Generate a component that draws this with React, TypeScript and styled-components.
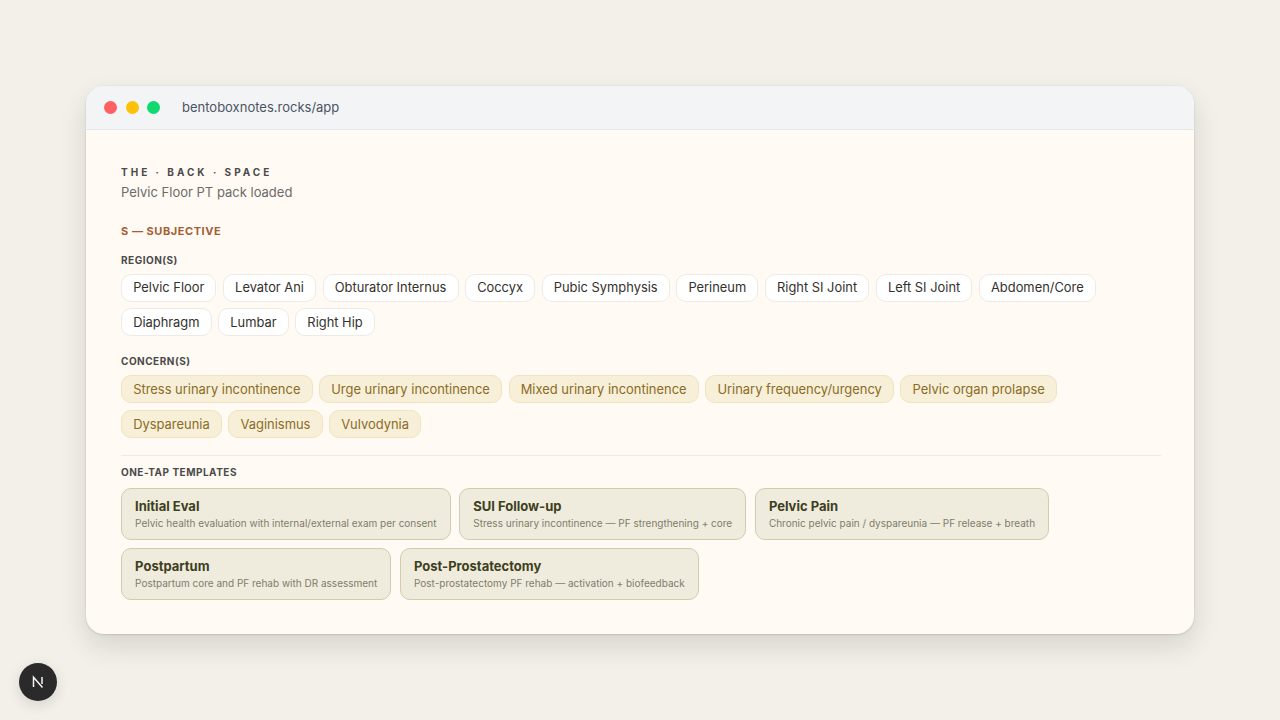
import React from "react"
import styled, { createGlobalStyle } from "styled-components"

const GlobalStyle = createGlobalStyle`
  html, body {
    margin: 0;
    padding: 0;
    background: #f3f0e9;
    font-family: Inter, "Liberation Sans", sans-serif;
  }
`

const Page = styled.main`
  height: 720px;
  box-sizing: border-box;
  padding: 86px;
  overflow: hidden;
`

const Window = styled.section`
  height: 548px;
  border-radius: 18px;
  overflow: hidden;
  background: #fffaf3;
  box-shadow: 0 0 0 1px rgba(0, 0, 0, 0.02), 0 1px 2px rgba(0, 0, 0, 0.1), 0 12px 28px rgba(0, 0, 0, 0.12);
`

const TitleBar = styled.header`
  height: 44px;
  box-sizing: border-box;
  display: flex;
  align-items: center;
  padding: 0 0 0 18px;
  background: #f3f4f6;
  border-bottom: 1px solid #e5e7eb;
`

const Dot = styled.span<{ $color: string }>`
  width: 13px;
  height: 13px;
  border-radius: 50%;
  margin-right: 8.5px;
  background: ${props => props.$color};
`

const Url = styled.span`
  margin-left: 13.5px;
  padding-bottom: 2px;
  font-size: 13px;
  color: #4b5563;
`

const Body = styled.div`
  padding: 35px 33px 0 35px;
`

const Brand = styled.div`
  font-size: 10px;
  line-height: 14px;
  font-weight: 700;
  letter-spacing: 0.3em;
  color: #4a4a4a;
`

const Pack = styled.div`
  margin-top: 5px;
  font-size: 13px;
  line-height: 16px;
  color: #6b6b6b;
`

const SectionTitle = styled.h2`
  margin: 24px 0 0;
  font-size: 11px;
  line-height: 14px;
  font-weight: 700;
  letter-spacing: 0.05em;
  color: #a55d35;
`

const Label = styled.h3<{ $top: number; $gap: number }>`
  margin: ${props => props.$top}px 0 ${props => props.$gap}px;
  font-size: 10px;
  line-height: 14px;
  font-weight: 700;
  letter-spacing: 0.05em;
  color: #4a4a4a;
`

const ChipRow = styled.div`
  display: flex;
  flex-wrap: wrap;
  gap: 6.5px;
`

const Chip = styled.button<{ $warm?: boolean }>`
  height: 28px;
  box-sizing: border-box;
  padding: 0 11.15px;
  border-radius: 10px;
  font: 400 ${props => (props.$warm ? "12.93px" : "12.88px")} Inter, sans-serif;
  border: 1px solid ${props => (props.$warm ? "#f1e3bf" : "#efebe4")};
  background: ${props => (props.$warm ? "#f8efd9" : "#ffffff")};
  color: ${props => (props.$warm ? "#8a6c26" : "#33312e")};
`

const Divider = styled.hr`
  margin: 17.5px 0 0;
  border: 0;
  border-top: 1px solid #efebe3;
`

const Templates = styled.div`
  display: flex;
  flex-wrap: wrap;
  gap: 8px 8.5px;
`

const Card = styled.button`
  height: 52px;
  box-sizing: border-box;
  padding: 0 13.1px;
  display: flex;
  flex-direction: column;
  justify-content: center;
  align-items: flex-start;
  border-radius: 10px;
  border: 1px solid #d2ccae;
  background: #efebdd;
  font-family: Inter, sans-serif;
`

const CardTitle = styled.span`
  margin-bottom: 2px;
  font-size: 13px;
  line-height: 16px;
  font-weight: 700;
  color: #3d4020;
`

const CardText = styled.span`
  font-size: 10px;
  line-height: 15px;
  color: #7f7d6a;
`

const DevBadge = styled.div`
  position: fixed;
  left: 19px;
  bottom: 19px;
  width: 38px;
  height: 38px;
  display: flex;
  align-items: center;
  justify-content: center;
  border-radius: 50%;
  background: #2a2a2a;
  box-shadow: 0 4px 14px rgba(0, 0, 0, 0.12);
`

const regions = ["Pelvic Floor", "Levator Ani", "Obturator Internus", "Coccyx", "Pubic Symphysis", "Perineum", "Right SI Joint", "Left SI Joint", "Abdomen/Core", "Diaphragm", "Lumbar", "Right Hip"]
const concerns = ["Stress urinary incontinence", "Urge urinary incontinence", "Mixed urinary incontinence", "Urinary frequency/urgency", "Pelvic organ prolapse", "Dyspareunia", "Vaginismus", "Vulvodynia"]
const templates = [
  ["Initial Eval", "Pelvic health evaluation with internal/external exam per consent"],
  ["SUI Follow-up", "Stress urinary incontinence — PF strengthening + core"],
  ["Pelvic Pain", "Chronic pelvic pain / dyspareunia — PF release + breath"],
  ["Postpartum", "Postpartum core and PF rehab with DR assessment"],
  ["Post-Prostatectomy", "Post-prostatectomy PF rehab — activation + biofeedback"],
]

export default function App() {
  return (
    <Page>
      <GlobalStyle />
      <Window>
        <TitleBar>
          <Dot $color="#ff5f62" />
          <Dot $color="#ffc107" />
          <Dot $color="#10d96f" />
          <Url>bentoboxnotes.rocks/app</Url>
        </TitleBar>
        <Body>
          <Brand>THE · BACK · SPACE</Brand>
          <Pack>Pelvic Floor PT pack loaded</Pack>
          <SectionTitle>S — SUBJECTIVE</SectionTitle>
          <Label $top={15} $gap={6.6}>REGION(S)</Label>
          <ChipRow>
            {regions.map(r => <Chip key={r}>{r}</Chip>)}
          </ChipRow>
          <Label $top={18} $gap={7}>CONCERN(S)</Label>
          <ChipRow>
            {concerns.map(c => <Chip key={c} $warm>{c}</Chip>)}
          </ChipRow>
          <Divider />
          <Label $top={9} $gap={9}>ONE-TAP TEMPLATES</Label>
          <Templates>
            {templates.map(([title, text]) => (
              <Card key={title}>
                <CardTitle>{title}</CardTitle>
                <CardText>{text}</CardText>
              </Card>
            ))}
          </Templates>
        </Body>
      </Window>
      <DevBadge>
        <svg width="14" height="14" viewBox="0 0 14 14" fill="none" stroke="#f5f5f5" strokeWidth="1.5">
          <path d="M2.5 12V2.2L11.5 12.5" />
          <path d="M11 2v7" />
        </svg>
      </DevBadge>
    </Page>
  )
}
